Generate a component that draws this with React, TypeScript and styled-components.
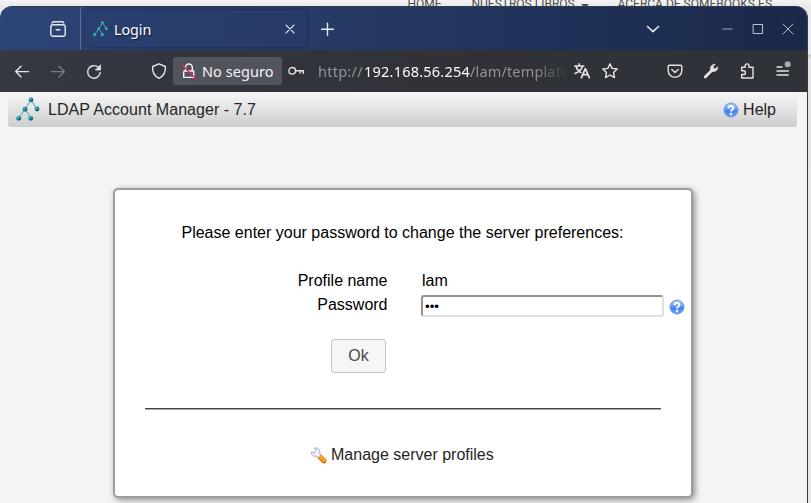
import React from "react";
import styled, { createGlobalStyle } from "styled-components";

const GlobalStyle = createGlobalStyle`
  * { box-sizing: border-box; }
  body { margin: 0; overflow: hidden; background: #ececec; }
`;

const Desktop = styled.div`
  position: relative;
  width: 811px;
  height: 503px;
  overflow: hidden;
  padding-top: 6px;
  background: linear-gradient(#f4f4f4 0, #e9e9e9 6px, #ededed 54px, #c9c9c9 55px, #e6e6e6 60px, #e8e8e8 100%);
`;

const BackgroundNav = styled.nav`
  position: absolute;
  left: 407.5px;
  top: -3px;
  display: flex;
  gap: 29px;
  font: 12px/15px Roboto, sans-serif;
  color: #4c4c4c;
  white-space: nowrap;
`;

const NavItem = styled.span<{ $width: number }>`
  width: ${(p) => p.$width}px;
  display: flex;
  align-items: center;
  gap: 6px;
`;

const Caret = styled.i`
  border: 4px solid transparent;
  border-top-color: #4c4c4c;
  border-bottom: 0;
  margin-top: 3px;
`;

const Window = styled.div`
  position: relative;
  width: 808px;
  height: 497px;
  display: flex;
  flex-direction: column;
  overflow: hidden;
  border-right: 1px solid #3b3c40;
  border-radius: 12px 12px 0 0;
  background: #f4f4f4;
`;

const TabBar = styled.div`
  height: 44px;
  flex: none;
  display: flex;
  align-items: center;
  border-top: 1px solid #2c3a4c;
  background: linear-gradient(90deg, #2e4578 0, #253963 45%, #1a2849 100%);
  color: #e4e8f0;
`;

const PinnedArea = styled.div`
  width: 81px;
  height: 100%;
  flex: none;
  display: flex;
  align-items: center;
  padding-left: 50px;
  border-right: 1px solid #5a6d98;
`;

const Tab = styled.div`
  width: 222px;
  height: 37px;
  flex: none;
  margin-left: 4px;
  padding: 0 10px 0 8px;
  display: flex;
  align-items: center;
  border-radius: 5px;
  background: linear-gradient(90deg, #293f70, #263b68);
  box-shadow: 0 0 3px rgba(10, 20, 50, 0.65);
`;

const TabTitle = styled.span`
  flex: 1;
  margin: 2px 0 0 5px;
  font: 14.4px/20px "Noto Sans", sans-serif;
  letter-spacing: -0.1px;
  color: #fff;
  text-shadow: 1px 1px 1px #101a34;
`;

const Toolbar = styled.div`
  height: 42px;
  flex: none;
  display: flex;
  align-items: center;
  padding-left: 14px;
  background: linear-gradient(90deg, #363842, #303238 55%, #2f3239);
  color: #e4e4e7;
`;

const IconSvg = styled.svg<{ $gap?: number; $dim?: boolean }>`
  display: block;
  flex: none;
  overflow: visible;
  margin-left: ${(p) => p.$gap ?? 0}px;
  opacity: ${(p) => (p.$dim ? 0.4 : 1)};
  fill: none;
  stroke: currentColor;
  stroke-width: 1.4;
  stroke-linecap: round;
  stroke-linejoin: round;
`;

type IconProps = { gap?: number; dim?: boolean; size?: number; children: React.ReactNode };
const Icon = ({ gap, dim, size = 16, children }: IconProps) => (
  <IconSvg $gap={gap} $dim={dim} width={size} height={size} viewBox="0 0 16 16">
    {children}
  </IconSvg>
);

const SecurityChip = styled.div`
  width: 109px;
  height: 28px;
  flex: none;
  margin-left: 6px;
  padding-left: 8px;
  display: flex;
  align-items: center;
  border-radius: 3px;
  background: #52545d;
  color: #f4f4f6;
  font: 14.5px/20px "Noto Sans", sans-serif;
`;

const ChipLabel = styled.span`
  margin-left: 5px;
  letter-spacing: 0.05px;
  white-space: nowrap;
`;

const Address = styled.div`
  width: 250px;
  flex: none;
  display: flex;
  margin-left: 14px;
  overflow: hidden;
  white-space: nowrap;
  font: 14.5px/20px "Noto Sans", sans-serif;
  color: #92949b;
  mask-image: linear-gradient(90deg, #000 215px, transparent 250px);
`;

const UrlPart = styled.span<{ $width: number; $host?: boolean; $spacing: number }>`
  width: ${(p) => p.$width}px;
  flex: none;
  letter-spacing: ${(p) => p.$spacing}px;
  color: ${(p) => (p.$host ? "#fbfbfe" : "inherit")};
`;

const Page = styled.main`
  flex: 1;
  padding: 0 10px 0 8px;
  font: 16px/20px "Liberation Sans", Arial, sans-serif;
  color: #000;
`;

const PageHeader = styled.header`
  height: 35px;
  display: flex;
  align-items: center;
  padding: 0 21px 0 8px;
  border-radius: 0 0 3px 3px;
  background: linear-gradient(#f7f7f7, #cdcdcd);
  color: #252525;
`;

const Product = styled.span`
  flex: 1;
  margin-left: 7px;
  letter-spacing: 0.04px;
`;

const HelpLabel = styled.span`
  margin-left: 4px;
`;

const Card = styled.section`
  width: 580px;
  height: 310px;
  margin: 61px 0 0 105px;
  padding: 33px 3px 0 30px;
  border: 2px solid #9c9ca1;
  border-radius: 5px;
  background: #fff;
  box-shadow: 2px 2px 6px rgba(0, 0, 0, 0.42);
`;

const Prompt = styled.p`
  width: 515px;
  margin: 0;
  text-align: center;
`;

const Fields = styled.div`
  margin-top: 28px;
  display: grid;
  grid-template-columns: 242.5px 243px 16px;
  grid-template-rows: 20px 20px;
  gap: 4px 0;
`;

const Label = styled.label`
  text-align: right;
`;

const Value = styled.span`
  padding-left: 34.5px;
`;

const PasswordInput = styled.input`
  display: block;
  width: 243px;
  height: 22px;
  margin-left: 33.5px;
  padding: 0 2px;
  border: 2px solid;
  border-color: #949494 #e0e0e0 #e0e0e0 #949494;
  border-radius: 3px;
  background: #fff;
  color: #000;
  font: 13.3px "Liberation Sans", Arial, sans-serif;
  outline: 0;
`;

const HelpSlot = styled.span`
  padding: 4px 0 0 38.5px;
`;

const OkButton = styled.button`
  display: block;
  width: 55px;
  height: 34px;
  margin: 24px 0 0 186px;
  padding: 0;
  border: 1px solid #c5c5c5;
  border-radius: 3px;
  background: #f6f6f6;
  color: #4a4a4a;
  font: 16px "Liberation Sans", Arial, sans-serif;
`;

const Divider = styled.hr`
  width: 516px;
  height: 2px;
  margin: 35px 0 0;
  border: 0;
  border-top: 1px solid #454545;
  background: #a9a9a9;
`;

const ManageLink = styled.a`
  margin: 35px 0 0 165px;
  display: flex;
  align-items: center;
  gap: 4px;
  color: #252525;
`;

const TreeLogo = ({ size }: { size: number }) => (
  <IconSvg width={size} height={size} viewBox="0 0 25 25">
    <path d="M15 3 L9 12 L3 21 M15 3 L21 12 M9 12 L15 21" stroke="#6bb5c3" strokeWidth="1.3" />
    {[[15, 2.8], [9, 12.2], [21, 12], [2.7, 21.3], [14.7, 21.3]].map(([x, y]) => (
      <g key={`${x}-${y}`} stroke="none">
        <circle cx={x} cy={y} r="2.4" fill={size < 20 ? "#28b5b8" : "#167e92"} />
        <circle cx={x - 0.7} cy={y - 0.8} r="1" fill="#48c9d6" />
        <path d={`M${x - 1} ${y + 2.1} Q${x + 2} ${y + 2.1} ${x + 2.2} ${y - 0.5} Q${x + 1} ${y + 1.4} ${x - 1} ${y + 2.1}`} fill="#0b424f" />
      </g>
    ))}
  </IconSvg>
);

const HelpIcon = () => (
  <IconSvg width="16" height="16" viewBox="0 0 16 16">
    <defs>
      <linearGradient id="help" x2="0" y2="1">
        <stop stopColor="#b2d0fb" />
        <stop offset=".45" stopColor="#659cf4" />
        <stop offset=".55" stopColor="#3f7ff4" />
        <stop offset="1" stopColor="#6ba6ff" />
      </linearGradient>
    </defs>
    <circle cx="8" cy="8" r="7" fill="url(#help)" stroke="#6c98e8" strokeWidth="1" />
    <path d="M5.6 6.1 C5.7 3.4 10.4 3.4 10.4 6 C10.4 7.7 8 7.9 8 9.5" stroke="#fff" strokeWidth="2" strokeLinecap="butt" />
    <circle cx="8" cy="12" r="1.2" fill="#fff" stroke="none" />
  </IconSvg>
);

const ToolIcon = () => (
  <IconSvg width="17" height="17" viewBox="0 0 17 17">
    <path d="M8.7 8.7 L14 13.9" stroke="#bf6c17" strokeWidth="5" />
    <path d="M8.9 8.6 L13.9 13.6" stroke="#ff9d0b" strokeWidth="3.5" />
    <path d="M9.8 8.4 L14.3 12.6" stroke="#ffc13c" strokeWidth="1" />
    <path d="M4.8 1.1 L6 3.7 L4.6 5.7 L1.4 5 C1.2 8 3.3 9.9 6.3 9.1 L8 10.7 L10.9 7.8 L9.6 6 C10.5 2.8 8.2 .3 4.8 1.1Z" fill="#e9e9f2" stroke="#b1b2c0" strokeWidth="1" />
    <path d="M7.2 4.2 L6.3 6.5 L8.5 8.7" stroke="#fff" />
  </IconSvg>
);

export default function App() {
  return (
    <>
      <GlobalStyle />
      <Desktop>
        <BackgroundNav>
          <NavItem $width={35}>HOME</NavItem>
          <NavItem $width={117}>NUESTROS LIBROS <Caret /></NavItem>
          <NavItem $width={155}>ACERCA DE SOMEBOOKS.ES</NavItem>
        </BackgroundNav>
        <Window>
          <TabBar>
            <PinnedArea>
              <Icon>
                <path d="M2.2 2 Q2.4 .8 3.6 .8 H12.4 Q13.6 .8 13.8 2" />
                <rect x=".8" y="3.8" width="14.4" height="11.4" rx="2.2" />
                <path d="M6.2 8.8 H9.8" />
              </Icon>
            </PinnedArea>
            <Tab>
              <TreeLogo size={16} />
              <TabTitle>Login</TabTitle>
              <Icon size={14}><path d="M3.5 3.5 L12.5 12.5 M12.5 3.5 L3.5 12.5" /></Icon>
            </Tab>
            <Icon gap={13}><path d="M7.5 2.2 V14.2 M1.5 8.2 H13.5" /></Icon>
            <Icon gap={309}><path d="M2.5 5.5 L8 10.7 L13.5 5.5" strokeWidth="1.6" /></Icon>
            <Icon gap={59} size={14}><path d="M3 8 H14" strokeWidth="1" opacity=".75" /></Icon>
            <Icon gap={16}><path d="M3.5 3.5 H12.5 V12.5 H3.5Z" strokeWidth="1" opacity=".8" /></Icon>
            <Icon gap={14}><path d="M3 3 L13 13 M13 3 L3 13" strokeWidth="1" opacity=".75" /></Icon>
          </TabBar>
          <Toolbar>
            <Icon><path d="M1.7 8.6 H14.5 M7 3.2 L1.7 8.6 L7 14" /></Icon>
            <Icon gap={20} dim><path d="M1.5 8.6 H14.3 M9 3.2 L14.3 8.6 L9 14" /></Icon>
            <Icon gap={20}>
              <path d="M12.2 4.3 A6.3 6.3 0 1 0 14.2 9.5" />
              <path d="M14.5 2.2 V7 H9.8Z" fill="currentColor" strokeWidth=".8" />
            </Icon>
            <Icon gap={49}><path d="M8 .8 L14.3 3.5 C15 8.8 12 13.2 8 15.3 C4 13.2 1 8.8 1.7 3.5Z" /></Icon>
            <SecurityChip>
              <Icon>
                <path d="M3 8 H12.7 V14.4 H2.7 V9 M4.5 8 V4.6 C4.5 -.3 11.3 -.3 11.3 4.6 V8" />
                <path d="M1.5 2.2 L14.5 15.2" stroke="#e22850" strokeWidth="1.5" />
              </Icon>
              <ChipLabel>No seguro</ChipLabel>
            </SecurityChip>
            <Icon gap={6}>
              <circle cx="4.2" cy="7.8" r="3.3" />
              <path d="M7.5 7.8 H15.3 V10.2 M12.2 7.8 V10" />
            </Icon>
            <Address>
              <UrlPart $width={46} $spacing={0.25}>http://</UrlPart>
              <UrlPart $width={106} $host $spacing={0.22}>192.168.56.254</UrlPart>
              <UrlPart $width={120} $spacing={0.15}>/lam/templates</UrlPart>
            </Address>
            <Icon gap={6}>
              <path d="M.7 3 H9.8 M5.2 .8 V3 M2 3.2 C3 7 5.2 8.5 7 9.5 M8.5 3.2 C7.5 7 4 9.2 1 10.5" strokeWidth="1.5" />
              <path d="M7.4 14.7 L11.3 5.7 L15.3 14.7 M8.8 11.7 H14" strokeWidth="1.7" />
            </Icon>
            <Icon gap={12}><path d="M8 .8 L10.1 5.4 L15.2 6 L11.5 9.4 L12.5 14.6 L8 12 L3.5 14.6 L4.5 9.4 L.8 6 L5.9 5.4Z" /></Icon>
            <Icon gap={49}>
              <path d="M2.5 2.3 H13.5 Q14.8 2.3 14.8 3.6 V7.4 C14.8 16.4 1.2 16.4 1.2 7.4 V3.6 Q1.2 2.3 2.5 2.3Z M4.8 6.4 L8 9.5 L11.2 6.4" />
            </Icon>
            <Icon gap={20}>
              <path d="M2.2 14 L9 7.2" strokeWidth="2.8" />
              <path d="M7.6 7.5 C6.7 3.5 9 1 12.3 1.2 L10.2 3.5 L10.4 5.6 L12.5 5.8 L14.8 3.7 C15 7 12.5 9.3 8.5 8.4Z" fill="currentColor" strokeWidth=".6" />
            </Icon>
            <Icon gap={20}>
              <path d="M2.7 4.2 H6.2 V2.8 C6.2 .2 10 .2 10 2.8 V4.2 H14 V15 H2.7 V11.5 H4.7 C7 11.5 7 7.8 4.7 7.8 H2.7Z" />
            </Icon>
            <Icon gap={20}>
              <path d="M2 4 H7 M2 8 H13.3 M2 12 H13.3" />
              <circle cx="12.7" cy="1.2" r="3" fill="#aaaab0" stroke="none" />
            </Icon>
          </Toolbar>
          <Page>
            <PageHeader>
              <TreeLogo size={25} />
              <Product>LDAP Account Manager - 7.7</Product>
              <HelpIcon />
              <HelpLabel>Help</HelpLabel>
            </PageHeader>
            <Card>
              <Prompt>Please enter your password to change the server preferences:</Prompt>
              <Fields>
                <Label>Profile name</Label>
                <Value>lam</Value>
                <span />
                <Label htmlFor="password">Password</Label>
                <PasswordInput id="password" type="password" defaultValue="lam" />
                <HelpSlot><HelpIcon /></HelpSlot>
              </Fields>
              <OkButton>Ok</OkButton>
              <Divider />
              <ManageLink><ToolIcon />Manage server profiles</ManageLink>
            </Card>
          </Page>
        </Window>
      </Desktop>
    </>
  );
}
